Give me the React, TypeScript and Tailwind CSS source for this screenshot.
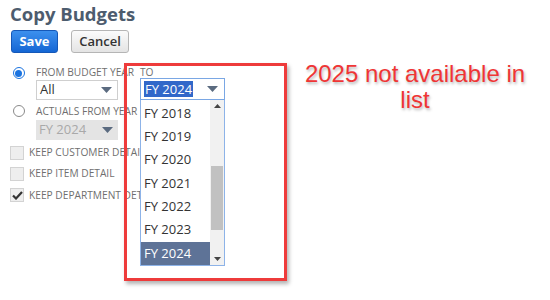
import React from "react";

const years = ["FY 2018", "FY 2019", "FY 2020", "FY 2021", "FY 2022", "FY 2023", "FY 2024"];

const Caret = ({ className = "" }: { className?: string }) => (
  <svg width="11" height="6" viewBox="0 0 11 6" className={className}>
    <path d="M0 0h11L5.5 6z" fill="#5b6b80" />
  </svg>
);

const Check = ({ checked = false }: { checked?: boolean }) => (
  <span className="w-[14px] h-[14px] shrink-0 border border-[#d3d3d3] bg-[#eeeeee] flex items-center justify-center">
    {checked && (
      <svg width="11" height="9" viewBox="0 0 11 9">
        <path d="M1 4.5l3 3L10 1" stroke="#333" strokeWidth="2.2" fill="none" />
      </svg>
    )}
  </span>
);

export default function App() {
  return (
    <div className="relative w-[550px] h-[300px] bg-white overflow-hidden font-['Open_Sans',sans-serif]">
      {/* Header */}
      <h1 className="pl-[10px] pt-[1px] text-[18.5px] leading-[26px] font-bold text-[#4d5c6e]">
        Copy Budgets
      </h1>

      <div className="flex gap-[13px] pl-[11px] mt-[3px]">
        <button className="w-[47px] h-[23px] rounded-[3px] border border-[#1558b8] bg-gradient-to-b from-[#3c90ee] to-[#1466d4] text-white text-[13px] font-bold leading-none">
          Save
        </button>
        <button className="w-[58px] h-[23px] rounded-[3px] border border-[#b5b5b5] bg-gradient-to-b from-[#fbfbfb] to-[#e4e4e4] text-[#333] text-[13px] font-semibold leading-none">
          Cancel
        </button>
      </div>

      {/* Form */}
      <div className="mt-[12px] flex flex-col whitespace-nowrap">
        <div className="flex">
          <div className="w-[36px] flex justify-center pl-[1px] pt-[2px]">
            <span className="w-[12px] h-[12px] rounded-full border border-[#1a73e0] bg-white flex items-center justify-center">
              <span className="w-[7px] h-[7px] rounded-full bg-[#1a73e0]" />
            </span>
          </div>
          <div className="flex flex-col">
            <div className="flex text-[10.2px] leading-[15px] text-[#6f6f6f] uppercase">
              <span className="w-[104px] shrink-0">From Budget Year</span>
              <span>To</span>
            </div>
            <div className="w-[82px] h-[20px] border border-[#cfcfcf] flex items-center justify-between pl-[3px] pr-[5px]">
              <span className="text-[13px] text-[#333]">All</span>
              <Caret />
            </div>
          </div>
        </div>

        <div className="flex mt-[4px]">
          <div className="w-[36px] flex justify-center pl-[1px] pt-[1px]">
            <span className="w-[12px] h-[12px] rounded-full border border-[#8a8a8a] bg-white" />
          </div>
          <div className="flex flex-col">
            <span className="text-[10.2px] leading-[15px] text-[#6f6f6f] uppercase">Actuals From Year</span>
            <div className="mt-[1px] w-[82px] h-[20px] bg-[#e4e4e4] flex items-center justify-between pl-[3px] pr-[5px]">
              <span className="text-[13px] text-[#a9a9a9]">FY 2024</span>
              <Caret />
            </div>
          </div>
        </div>

        <div className="flex flex-col gap-[6px] pl-[10px] mt-[5px] text-[10.2px] text-[#6f6f6f] uppercase">
          <div className="flex items-center gap-[5px]">
            <Check />
            <span>Keep Customer Detail</span>
          </div>
          <div className="flex items-center gap-[5px]">
            <Check />
            <span>Keep Item Detail</span>
          </div>
          <div className="flex items-center gap-[5px]">
            <Check checked />
            <span>Keep Department Detail</span>
          </div>
        </div>
      </div>

      {/* Open TO dropdown */}
      <div className="absolute left-[140px] top-[78px] w-[85px]">
        <div className="h-[22px] border border-[#7aa7e4] bg-white flex items-center justify-between pl-[3px] pr-[6px]">
          <span className="text-[13px] leading-[16px] text-white bg-[#3168c9] px-[1px]">FY 2024</span>
          <Caret />
        </div>
        <div className="flex border border-t-0 border-[#8db3e8] bg-white h-[166px]">
          <div className="flex-1 flex flex-col pt-[2px]">
            {years.map((y) => (
              <div
                key={y}
                className={`h-[23.3px] flex items-center pl-[3px] text-[13px] ${
                  y === "FY 2024" ? "bg-[#5e7397] text-white" : "text-[#333]"
                }`}
              >
                {y}
              </div>
            ))}
          </div>
          <div className="w-[14px] bg-[#f1f1f1] flex flex-col items-center justify-between py-[4px]">
            <svg width="7" height="4" viewBox="0 0 7 4">
              <path d="M0 4h7L3.5 0z" fill="#444" />
            </svg>
            <div className="w-[12px] h-[64px] bg-[#c1c1c1] mt-[58px]" />
            <svg width="7" height="4" viewBox="0 0 7 4" className="mt-auto">
              <path d="M0 0h7L3.5 4z" fill="#444" />
            </svg>
          </div>
        </div>
      </div>

      {/* Annotation */}
      <div className="absolute left-[124px] top-[63px] w-[163px] h-[218px] border-[3px] border-[#ee3b3b] shadow-[2px_3px_4px_rgba(0,0,0,0.3)]" />
      <div className="absolute left-[295px] top-[61px] w-[240px] text-center text-[24px] leading-[26px] text-[#ef3535] font-['Liberation_Sans',Arial,sans-serif] [text-shadow:1px_2px_3px_rgba(0,0,0,0.3)]">
        2025 not available in
        <br />
        list
      </div>
    </div>
  );
}
